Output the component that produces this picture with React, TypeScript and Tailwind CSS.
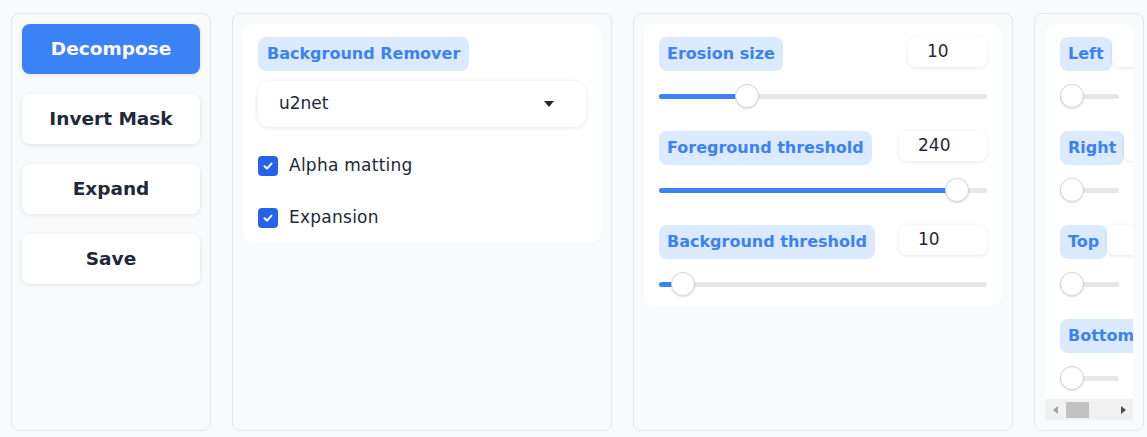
import React from "react";

type SliderProps = {
  pct: number;
  width: string;
};

const Slider = ({ pct, width }: SliderProps) => {
  return (
    <div className={`mt-[13px] flex h-6 items-center ${width}`}>
      <div className="relative h-[5px] w-full rounded-full bg-[#e5e7eb]">
        <div
          className="absolute left-0 top-0 h-full rounded-full bg-[#3b82f6]"
          style={{ width: `calc(12px + (100% - 24px) * ${pct})` }}
        />
        <div
          className="absolute top-1/2 h-6 w-6 -translate-y-1/2 rounded-full border border-[#d1d5db] bg-white shadow-[0_1px_2px_rgba(0,0,0,0.12)]"
          style={{ left: `calc((100% - 24px) * ${pct})` }}
        />
      </div>
    </div>
  );
};

const Badge = ({ label, className }: { label: string; className?: string }) => (
  <div
    className={`flex h-[34px] shrink-0 items-center rounded-lg bg-[#dbeafe] px-2 text-[16px] font-bold text-[#3b82f6] ${className ?? ""}`}
  >
    {label}
  </div>
);

const NumberBox = ({ value, width }: { value: string; width: string }) => (
  <div
    className={`flex h-[30px] shrink-0 items-center rounded-lg bg-white pl-[19px] text-[17px] text-[#1f2937] shadow-[0_1px_4px_rgba(0,0,0,0.1)] ${width}`}
  >
    {value}
  </div>
);

const CheckRow = ({ label }: { label: string }) => (
  <div className="flex h-5 items-center gap-[11px]">
    <div className="flex h-5 w-5 items-center justify-center rounded-[4px] bg-[#2563eb]">
      <svg width="12" height="12" viewBox="0 0 12 12" fill="none">
        <path
          d="M2.5 6.3 L5 8.6 L9.5 3.6"
          stroke="white"
          strokeWidth="2"
          strokeLinecap="round"
          strokeLinejoin="round"
        />
      </svg>
    </div>
    <span className="text-[17px] tracking-[0.25px] text-[#1f2937]">{label}</span>
  </div>
);

const ActionButton = ({ label, primary }: { label: string; primary?: boolean }) => (
  <button
    className={
      primary
        ? "h-[50px] w-full rounded-lg bg-[#3b82f6] text-[18.5px] font-bold text-white shadow-[0_1px_4px_rgba(0,0,0,0.1)]"
        : "h-[50px] w-full rounded-lg bg-white text-[18.5px] font-bold text-[#1f2937] shadow-[0_1px_4px_rgba(0,0,0,0.1)]"
    }
  >
    {label}
  </button>
);

const sliderRows = [
  { label: "Erosion size", value: "10", box: "w-[79px]", pct: 0.25 },
  { label: "Foreground threshold", value: "240", box: "w-[88px]", pct: 240 / 255 },
  { label: "Background threshold", value: "10", box: "w-[88px]", pct: 10 / 255 },
];

const sideRows = ["Left", "Right", "Top", "Bottom"];

export default function App() {
  return (
    <div className="flex h-[437px] w-[1147px] gap-[21px] overflow-hidden bg-[#f9fafb] pl-[11px] pt-[13px] font-['DejaVu_Sans',sans-serif]">
      {/* actions */}
      <div className="flex h-[418px] w-[200px] shrink-0 flex-col gap-5 rounded-lg border border-[#e5e7eb] p-[10px]">
        <ActionButton label="Decompose" primary />
        <ActionButton label="Invert Mask" />
        <ActionButton label="Expand" />
        <ActionButton label="Save" />
      </div>

      {/* remover */}
      <div className="h-[418px] w-[380px] shrink-0 rounded-lg border border-[#e5e7eb] p-[10px]">
        <div className="flex flex-col rounded-xl bg-white px-[15px] pb-[14px] pt-[13px]">
          <Badge label="Background Remover" className="self-start px-[9px]" />
          <div className="mt-[10px] flex h-[46px] items-center justify-between rounded-xl bg-white pl-[21px] pr-[32px] shadow-[0_1px_5px_rgba(0,0,0,0.1)]">
            <span className="text-[17px] text-[#1f2937]">u2net</span>
            <svg width="10" height="6" viewBox="0 0 10 6">
              <path d="M0 0 L10 0 L5 6 Z" fill="#1f2937" />
            </svg>
          </div>
          <div className="mt-[29px] flex flex-col gap-8">
            <CheckRow label="Alpha matting" />
            <CheckRow label="Expansion" />
          </div>
        </div>
      </div>

      {/* thresholds */}
      <div className="h-[418px] w-[380px] shrink-0 rounded-lg border border-[#e5e7eb] p-[10px]">
        <div className="flex flex-col gap-[23px] rounded-xl bg-white px-[15px] pb-[10px] pt-[13px]">
          {sliderRows.map((row) => (
            <div key={row.label} className="flex flex-col">
              <div className="flex items-start justify-between">
                <Badge label={row.label} />
                <NumberBox value={row.value} width={row.box} />
              </div>
              <Slider pct={row.pct} width="w-full" />
            </div>
          ))}
        </div>
      </div>

      {/* expansion sides */}
      <div className="h-[418px] w-[110px] shrink-0 rounded-lg border border-[#e5e7eb] p-[10px]">
        <div className="flex h-full flex-col overflow-hidden rounded-t-xl bg-white">
          <div className="flex flex-1 flex-col gap-[23px] overflow-hidden pl-[15px] pt-[13px]">
            {sideRows.map((label) => (
              <div key={label} className="flex flex-col">
                <div className="flex items-start">
                  <Badge label={label} />
                  <NumberBox value="" width="w-[88px]" />
                </div>
                <Slider pct={0} width="w-[59px]" />
              </div>
            ))}
          </div>
          <div className="flex h-[21px] shrink-0 items-center bg-[#f1f1f1]">
            <div className="flex w-[20px] justify-center">
              <svg width="5" height="8" viewBox="0 0 5 8">
                <path d="M5 0 L0 4 L5 8 Z" fill="#a3a3a3" />
              </svg>
            </div>
            <div className="ml-px h-[16px] w-[23px] bg-[#c1c1c1]" />
            <div className="flex-1" />
            <div className="flex w-[20px] justify-center">
              <svg width="5" height="8" viewBox="0 0 5 8">
                <path d="M0 0 L5 4 L0 8 Z" fill="#505050" />
              </svg>
            </div>
          </div>
        </div>
      </div>
    </div>
  );
}
